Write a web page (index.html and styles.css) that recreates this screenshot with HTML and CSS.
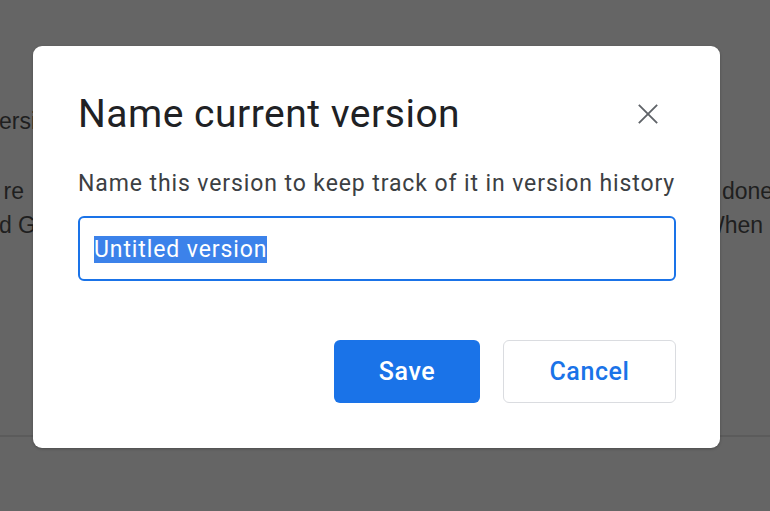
FILE: index.html
```html
<!DOCTYPE html>
<html lang="en">
<head>
<meta charset="utf-8">
<title>Name current version</title>
<link rel="stylesheet" href="styles.css">
</head>
<body>
<div class="page">
  <div class="page-main">
    <div class="bg-row row1">
      <div class="bg-left"><span class="l1">versi</span></div>
    </div>
    <div class="bg-row row2">
      <div class="bg-left"><span class="l2">re</span></div>
      <div class="bg-right"><span class="r2">done</span></div>
    </div>
    <div class="bg-row row3">
      <div class="bg-left"><span class="l3">and G</span></div>
      <div class="bg-right"><span class="r3">When</span></div>
    </div>
  </div>
</div>

<div class="dialog" role="dialog" aria-labelledby="dlg-title">
  <div class="dialog-head">
    <h1 id="dlg-title" class="dialog-title">Name current version</h1>
    <button class="close" aria-label="Close">
      <svg viewBox="0 0 24 24" width="24" height="24" aria-hidden="true">
        <path d="M2 2 L22 22 M22 2 L2 22" stroke="#5f6368" stroke-width="2" fill="none" stroke-linecap="butt"/>
      </svg>
    </button>
  </div>
  <p class="dialog-text">Name this version to keep track of it in version history</p>
  <div class="field"><span class="sel">Untitled version</span></div>
  <div class="actions">
    <button class="btn btn-primary">Save</button>
    <button class="btn btn-secondary">Cancel</button>
  </div>
</div>
</body>
</html>
```

FILE: styles.css
```css
* { box-sizing: border-box; }

html, body {
  margin: 0;
  padding: 0;
}

body {
  width: 770px;
  height: 511px;
  overflow: hidden;
  background: #656565;
  position: relative;
  font-family: Roboto, "Liberation Sans", Arial, sans-serif;
}

.page {
  height: 511px;
  display: flex;
  flex-direction: column;
}

.page-main {
  height: 437px;
  border-bottom: 2px solid #5b5b5b;
  display: flex;
  flex-direction: column;
  font-family: "Liberation Sans", Arial, sans-serif;
  font-size: 23px;
  color: #1f1f1f;
}

.bg-row {
  display: flex;
  justify-content: space-between;
  line-height: 34px;
  height: 34px;
}

.row1 { margin-top: 104px; }
.row2 { margin-top: 36px; }
.row3 { margin-top: 0; }

.bg-left {
  width: 36px;
  display: flex;
  justify-content: flex-end;
  white-space: nowrap;
}

.bg-left .l2 { margin-right: 12px; }

.bg-right {
  width: 58px;
  display: flex;
  justify-content: flex-start;
  white-space: nowrap;
}

.bg-right .r2 { margin-left: 10px; }
.bg-right .r3 { margin-left: -9px; }

.dialog {
  position: absolute;
  left: 33px;
  top: 46px;
  width: 687px;
  height: 402px;
  background: #ffffff;
  border-radius: 9px;
  box-shadow: 0 1px 3px rgba(0,0,0,0.25);
  padding: 46px 44px 44px 45px;
  display: flex;
  flex-direction: column;
}

.dialog-head {
  display: flex;
  align-items: center;
  justify-content: space-between;
}

.dialog-title {
  margin: 0;
  font-weight: 400;
  font-size: 39px;
  line-height: 44px;
  color: #202124;
  letter-spacing: 0.5px;
  white-space: nowrap;
}

.close {
  width: 40px;
  height: 40px;
  margin-right: 8px;
  border: 0;
  background: transparent;
  padding: 0;
  display: flex;
  align-items: center;
  justify-content: center;
}

.close svg {
  width: 22px;
  height: 22px;
}

.dialog-text {
  margin: 34px 0 0;
  font-size: 23px;
  line-height: 28px;
  letter-spacing: 0.9px;
  color: #3c4043;
  white-space: nowrap;
}

.field {
  margin-top: 18px;
  height: 65px;
  border: 2px solid #1a73e8;
  border-radius: 6px;
  padding: 1px 14px 0;
  display: flex;
  align-items: center;
  font-size: 23px;
  letter-spacing: 0.9px;
}

.sel {
  background: #3c82ea;
  color: #ffffff;
  line-height: 27px;
}

.actions {
  margin-top: 59px;
  display: flex;
  justify-content: flex-end;
  gap: 23px;
}

.btn {
  height: 63px;
  border-radius: 6px;
  font-family: Roboto, "Liberation Sans", Arial, sans-serif;
  font-size: 25px;
  font-weight: 500;
  letter-spacing: 0.6px;
  cursor: pointer;
}

.btn-primary {
  width: 146px;
  background: #1a73e8;
  color: #ffffff;
  border: 0;
}

.btn-secondary {
  width: 173px;
  background: #ffffff;
  color: #1a73e8;
  border: 1px solid #dadce0;
}
```
